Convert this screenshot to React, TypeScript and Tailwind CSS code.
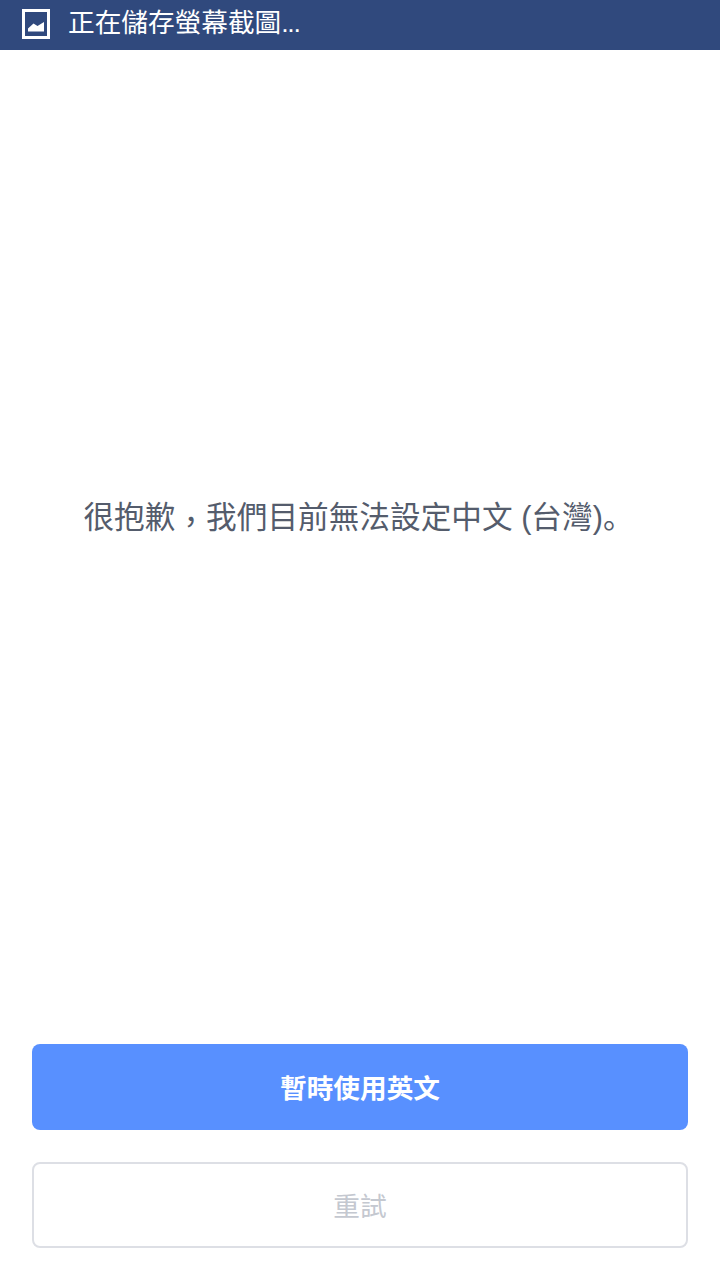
function ScreenshotIcon() {
  return (
    <svg width="28" height="30" viewBox="0 0 28 30" className="mb-[2px] shrink-0">
      <rect x="1.5" y="1.5" width="25" height="27" fill="none" stroke="#fff" strokeWidth="3" />
      <path d="M6 22.5 L6 19.5 L11.5 14.5 L15.5 17 L22 13 L22 22.5 Z" fill="#fff" />
    </svg>
  );
}

export default function App() {
  return (
    <div
      lang="zh-TW"
      className="flex h-[1280px] w-[720px] flex-col bg-white font-['Liberation_Sans','Noto_Sans_CJK_TC',sans-serif]"
    >
      <header className="flex h-[50px] shrink-0 items-center bg-[#30497d] pl-[22px] text-white">
        <ScreenshotIcon />
        <span className="mb-[3px] ml-[18px] text-[26.67px] leading-none">
          正在儲存螢幕截圖<span className="tracking-[-1.3px]">...</span>
        </span>
      </header>

      <main className="flex flex-1 flex-col px-8 pb-8">
        <div className="flex flex-1 items-center justify-center pb-[62px] pr-[3px]">
          <p className="text-[30.67px] leading-none text-[#545c6c]">
            很抱歉<span className="inline-block translate-y-[5px]">，</span>我們目前無法設定中文 (台灣)
            <span lang="ja" className="font-['Noto_Sans_CJK_JP',sans-serif]">。</span>
          </p>
        </div>
        <button
          type="button"
          className="flex h-[86px] w-full items-center justify-center rounded-lg bg-[#5890ff] pt-[4px] text-[26.67px] font-bold text-white"
        >
          暫時使用英文
        </button>
        <button
          type="button"
          className="mt-8 flex h-[86px] w-full items-center justify-center rounded-lg border-2 border-[#dddfe5] bg-white pt-[4px] text-[26.67px] text-[#c4c8d0]"
        >
          重試
        </button>
      </main>
    </div>
  );
}
